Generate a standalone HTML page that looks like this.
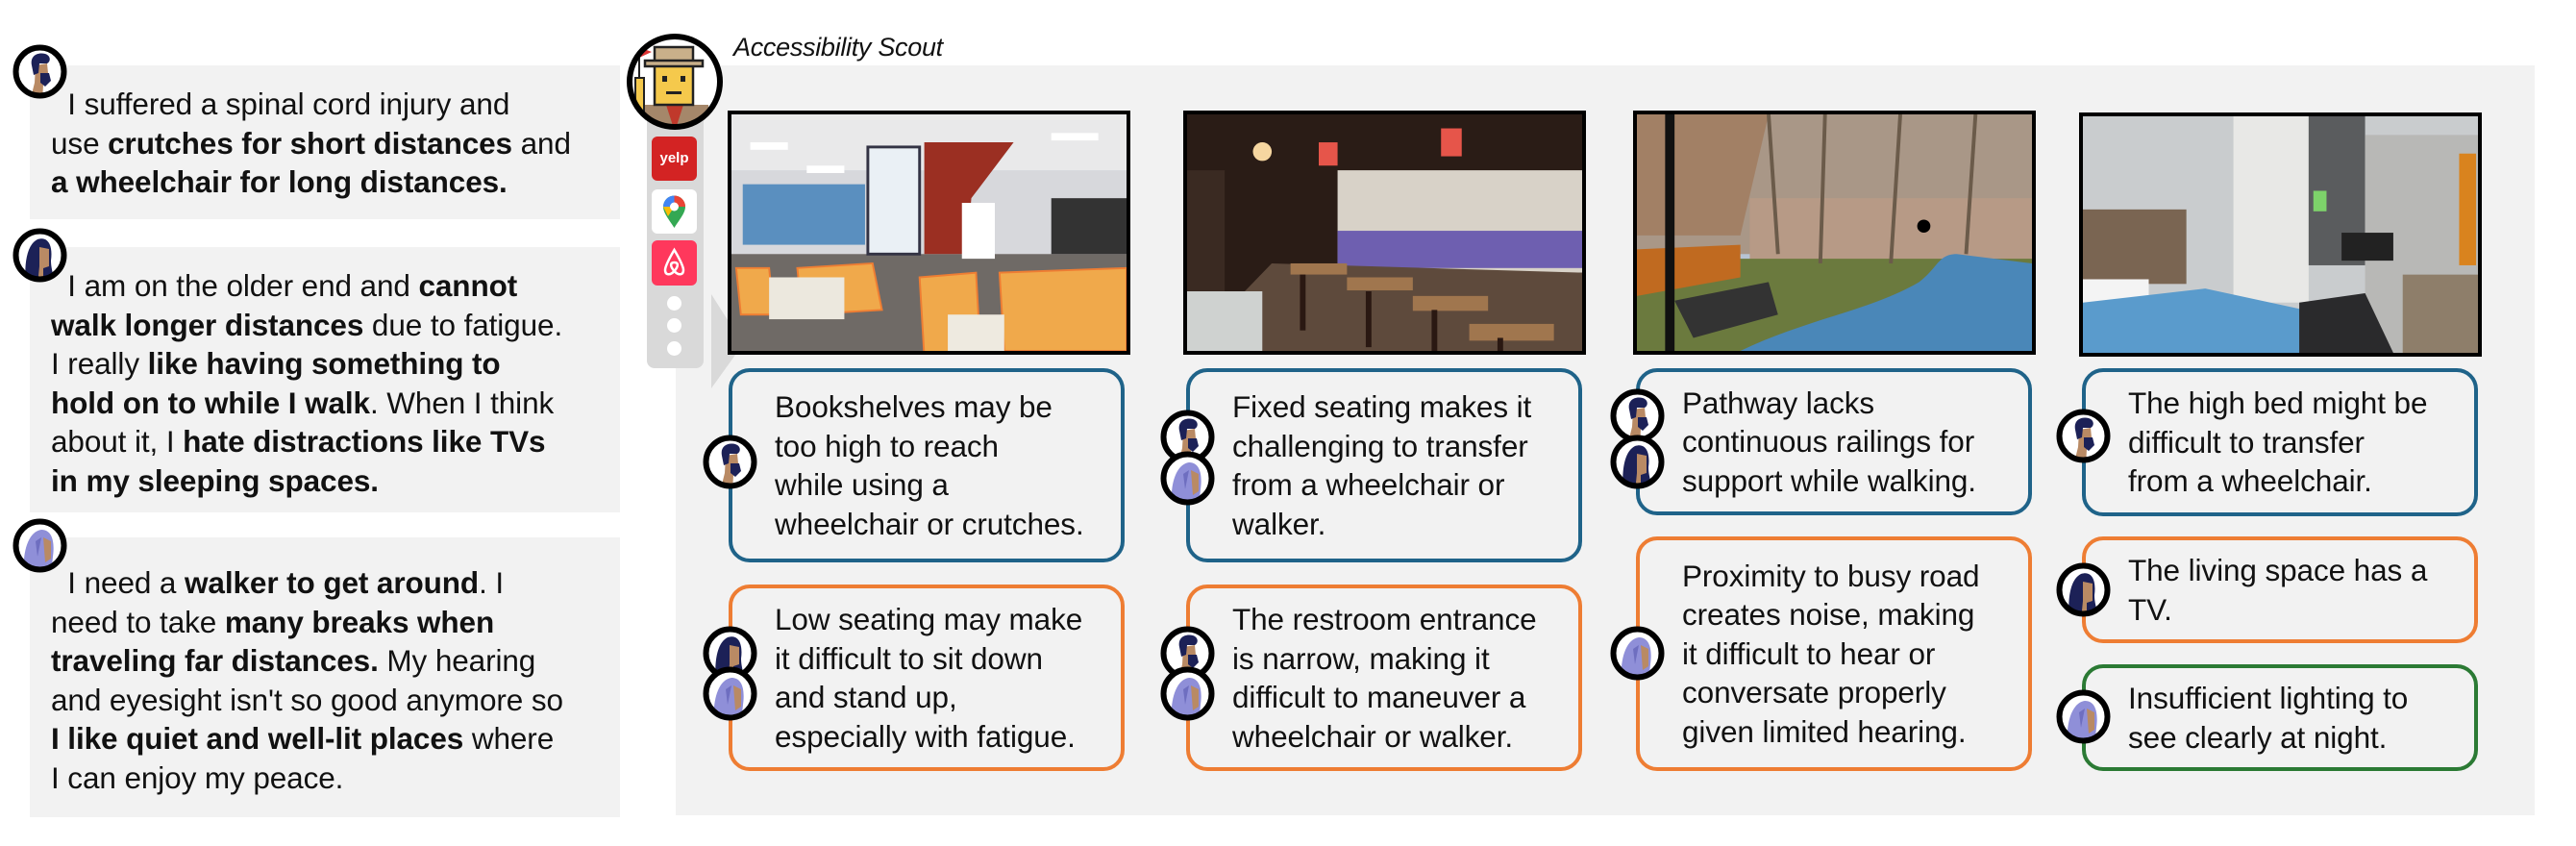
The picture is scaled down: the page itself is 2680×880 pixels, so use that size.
<!DOCTYPE html>
<html><head><meta charset="utf-8">
<style>
*{margin:0;padding:0;box-sizing:border-box}
body{width:2680px;height:880px;background:#fff;position:relative;overflow:hidden;font-family:"Liberation Sans",sans-serif;color:#111}
.abs{position:absolute}
.lp{position:absolute;left:31px;width:614px;background:#f2f2f2}
.lt{position:absolute;left:53px;font-size:31.5px;line-height:40.5px;white-space:nowrap;letter-spacing:-0.1px}
.lt b{font-weight:bold}
.av{position:absolute;width:57px;height:57px}
.img{position:absolute;border:4px solid #000;width:419px;height:254px;overflow:hidden;background:#888}
.img svg{display:block;width:100%;height:100%}
.card{position:absolute;width:412px;border:4px solid;border-radius:22px;background:#f2f2f2;display:flex;align-items:center;padding-left:44px;font-size:31.5px;line-height:40.5px;white-space:nowrap;letter-spacing:-0.1px}
.b{border-color:#1f6389}.o{border-color:#ee7d33}.g{border-color:#2b7a34}
</style></head><body>
<svg width="0" height="0" style="position:absolute">
<defs>
<clipPath id="cc"><circle cx="28.5" cy="28.5" r="23"/></clipPath>
<symbol id="A" viewBox="0 0 57 57">
<circle cx="28.5" cy="28.5" r="25" fill="#fff"/>
<g clip-path="url(#cc)">
<path d="M24 22 L36 20 L38 40 L32 42 L31 60 L18 60 L23 40 Z" fill="#b98a64"/>
<path d="M20 22 C18 12 26 8 34 10 C40 12 40 18 36 20 L28 20 L27 30 L22 32 Z" fill="#1c2157"/>
<path d="M29 30 L38 30 L40 38 L34 44 L29 40 Z" fill="#1c2157"/>
</g>
<circle cx="28.5" cy="28.5" r="25" fill="none" stroke="#000" stroke-width="6"/>
</symbol>
<symbol id="B" viewBox="0 0 57 57">
<circle cx="28.5" cy="28.5" r="25" fill="#fff"/>
<g clip-path="url(#cc)">
<path d="M14 60 C12 40 14 18 26 12 C38 8 42 20 40 34 C40 44 44 52 44 60 Z" fill="#1c2157"/>
<path d="M28 20 L38 22 L38 40 L32 42 L32 60 L26 60 L28 40 Z" fill="#b98a64"/>
</g>
<circle cx="28.5" cy="28.5" r="25" fill="none" stroke="#000" stroke-width="6"/>
</symbol>
<symbol id="C" viewBox="0 0 57 57">
<circle cx="28.5" cy="28.5" r="25" fill="#fff"/>
<g clip-path="url(#cc)">
<path d="M12 60 C10 36 16 14 30 12 C42 12 44 26 42 40 L40 60 Z" fill="#8f8fd8"/>
<path d="M32 20 L40 24 L40 42 L34 46 Z" fill="#b98a64"/>
<path d="M24 24 L30 20 L26 40 Z" fill="#6e6ec0"/>
</g>
<circle cx="28.5" cy="28.5" r="25" fill="none" stroke="#000" stroke-width="6"/>
</symbol>
</defs>
</svg>

<!-- left panels -->
<div class="lp" style="top:68px;height:160px"></div>
<div class="lp" style="top:257px;height:276px"></div>
<div class="lp" style="top:559px;height:291px"></div>
<svg class="av" style="left:13px;top:46px"><use href="#A"/></svg>
<svg class="av" style="left:13px;top:237px"><use href="#B"/></svg>
<svg class="av" style="left:13px;top:539px"><use href="#C"/></svg>

<div class="lt" style="top:88px">&nbsp;&nbsp;I suffered a spinal cord injury and<br>use <b>crutches for short distances</b> and<br><b>a wheelchair for long distances.</b></div>
<div class="lt" style="top:277px">&nbsp;&nbsp;I am on the older end and <b>cannot</b><br><b>walk longer distances</b> due to fatigue.<br>I really <b>like having something to</b><br><b>hold on to while I walk</b>. When I think<br>about it, I <b>hate distractions like TVs</b><br><b>in my sleeping spaces.</b></div>
<div class="lt" style="top:586px">&nbsp;&nbsp;I need a <b>walker to get around</b>. I<br>need to take <b>many breaks when</b><br><b>traveling far distances.</b> My hearing<br>and eyesight isn't so good anymore so<br><b>I like quiet and well-lit places</b> where<br>I can enjoy my peace.</div>

<!-- main panel -->
<div class="abs" style="left:703px;top:68px;width:1934px;height:780px;background:#f2f2f2"></div>
<div class="abs" style="left:673px;top:90px;width:59px;height:293px;background:#d9d9d9;border-radius:0 0 8px 8px"></div>
<svg class="abs" style="left:730px;top:306px" width="46" height="100"><polygon points="10,0 43,52 10,98" fill="#d9d9d9"/></svg>
<div class="abs" style="left:763px;top:34px;font-size:27px;font-style:italic;letter-spacing:-0.3px">Accessibility Scout</div>

<!-- scout avatar -->
<svg class="abs" style="left:651px;top:33px" width="102" height="104" viewBox="0 0 102 104">
<defs><clipPath id="sc"><circle cx="51" cy="52" r="47"/></clipPath></defs>
<circle cx="51" cy="52" r="47" fill="#fff"/>
<g clip-path="url(#sc)">
<rect x="18" y="76" width="68" height="32" fill="#a5876a"/>
<path d="M42 76 L51 104 L60 76Z" fill="#c0392b"/>
<rect x="30" y="34" width="40" height="42" fill="#f5c94c" stroke="#222" stroke-width="2.5"/>
<rect x="30" y="16" width="40" height="16" fill="#c9b08a" stroke="#222" stroke-width="2.5"/>
<rect x="20" y="30" width="60" height="6" fill="#c9b08a" stroke="#222" stroke-width="2.5"/>
<rect x="38" y="46" width="5" height="6" fill="#222"/><rect x="57" y="46" width="5" height="6" fill="#222"/>
<rect x="42" y="62" width="16" height="3" fill="#222"/>
<rect x="10" y="48" width="9" height="34" fill="#f5c94c" stroke="#222" stroke-width="2"/>
<line x1="14" y1="16" x2="14" y2="48" stroke="#222" stroke-width="2"/>
<path d="M14 16 L27 21 L14 27Z" fill="#d33"/>
</g>
<circle cx="51" cy="52" r="47" fill="none" stroke="#000" stroke-width="6"/>
</svg>
<!-- app icons -->
<div class="abs" style="left:678px;top:142px;width:47px;height:46px;background:#d32323;border-radius:6px;color:#fff;font-weight:bold;font-size:15px;line-height:46px;text-align:center">yelp</div>
<svg class="abs" style="left:678px;top:197px" width="47" height="46" viewBox="0 0 47 46"><rect width="47" height="46" rx="6" fill="#fff"/><path d="M23.5 40 C17 30 12 24 12 18 A11.5 11.5 0 0 1 35 18 C35 24 30 30 23.5 40Z" fill="#34a853"/><path d="M12 18 A11.5 11.5 0 0 1 23.5 6.5 L23.5 18Z" fill="#4285f4"/><path d="M23.5 6.5 A11.5 11.5 0 0 1 35 18 L23.5 18Z" fill="#ea4335"/><path d="M12 18 L23.5 18 L17 28Z" fill="#fbbc04"/><circle cx="23.5" cy="18" r="4.5" fill="#fff"/></svg>
<svg class="abs" style="left:678px;top:250px" width="47" height="47" viewBox="0 0 47 47"><rect width="47" height="47" rx="6" fill="#ff385c"/><path d="M23.5 10 C20 16 14 26 14 31 C14 36 19 37 23.5 32 C28 37 33 36 33 31 C33 26 27 16 23.5 10Z M23.5 32 C19 27 19 23 23.5 23 C28 23 28 27 23.5 32Z" fill="none" stroke="#fff" stroke-width="2.5"/></svg>
<div class="abs" style="left:694px;top:308px;width:15px;height:15px;border-radius:50%;background:#fff"></div>
<div class="abs" style="left:694px;top:331px;width:15px;height:15px;border-radius:50%;background:#fff"></div>
<div class="abs" style="left:694px;top:355px;width:15px;height:15px;border-radius:50%;background:#fff"></div>

<!-- images -->
<div class="img" style="left:757px;top:115px"><svg viewBox="0 0 420 254" preserveAspectRatio="none">
<rect width="420" height="254" fill="#d7d8dc"/><rect y="0" width="420" height="60" fill="#e9e9ea"/>
<rect y="150" width="420" height="104" fill="#6f6a66"/>
<rect x="145" y="35" width="55" height="115" fill="#eaf0f5" stroke="#334" stroke-width="3"/>
<path d="M205 30 L300 30 L255 90 L250 150 L205 150Z" fill="#9b2f22"/>
<rect x="245" y="95" width="35" height="60" fill="#fff"/><rect x="340" y="90" width="80" height="60" fill="#333"/>
<rect x="12" y="75" width="130" height="65" fill="#5a8fbf"/>
<path d="M5 165 L40 165 L45 215 L10 215Z M70 165 L150 160 L160 210 L75 215Z M200 175 L260 170 L265 260 L205 260Z M285 170 L420 165 L420 254 L290 254Z" fill="#f0a94b" stroke="#ee7d33" stroke-width="2"/>
<rect x="40" y="175" width="80" height="45" fill="#ece8de"/><rect x="230" y="215" width="60" height="39" fill="#eeeae0"/>
<rect x="20" y="30" width="40" height="8" fill="#fff"/><rect x="80" y="55" width="40" height="8" fill="#fff"/><rect x="340" y="20" width="50" height="8" fill="#fff"/>
</svg></div>
<div class="img" style="left:1231px;top:115px"><svg viewBox="0 0 420 254" preserveAspectRatio="none">
<rect width="420" height="254" fill="#2a1c16"/>
<rect x="160" y="60" width="260" height="110" fill="#d8d2c8"/>
<rect x="160" y="125" width="260" height="40" fill="#6e5fb0"/>
<rect x="0" y="60" width="40" height="150" fill="#3a2a22"/>
<path d="M0 254 L90 160 L420 170 L420 254Z" fill="#5e4a3c"/>
<g fill="#a0764e"><rect x="110" y="160" width="60" height="12"/><rect x="170" y="175" width="70" height="14"/><rect x="240" y="195" width="80" height="16"/><rect x="300" y="225" width="90" height="18"/></g>
<g fill="#2a1812"><rect x="120" y="172" width="6" height="60"/><rect x="190" y="190" width="6" height="60"/><rect x="260" y="210" width="6" height="44"/><rect x="330" y="240" width="6" height="14"/></g>
<rect x="0" y="190" width="80" height="64" fill="#cfd2d0"/>
<circle cx="80" cy="40" r="10" fill="#f6d6a0"/><rect x="140" y="30" width="20" height="25" fill="#e6554a"/><rect x="270" y="15" width="22" height="30" fill="#e6554a"/>
</svg></div>
<div class="img" style="left:1699px;top:115px"><svg viewBox="0 0 420 254" preserveAspectRatio="none">
<rect width="420" height="254" fill="#b7c4d4"/>
<rect x="0" y="0" width="420" height="150" fill="#a99787"/>
<rect x="120" y="90" width="300" height="70" fill="#b79a86"/>
<path d="M0 0 L140 0 L110 130 L0 130Z" fill="#a07a5c" opacity=".8"/>
<rect y="155" width="420" height="99" fill="#6b7a3e"/>
<path d="M110 254 C180 220 250 210 300 180 C320 165 320 150 340 150 L420 160 L420 254Z" fill="#4a87b8"/>
<path d="M0 145 L110 140 L110 175 L0 195Z" fill="#c06a20"/>
<rect x="30" y="0" width="10" height="254" fill="#111"/>
<path d="M40 200 L140 180 L150 215 L60 240Z" fill="#333"/>
<g stroke="#6b5b4a" stroke-width="4"><line x1="200" y1="0" x2="195" y2="160"/><line x1="280" y1="0" x2="270" y2="160"/><line x1="360" y1="0" x2="350" y2="150"/><line x1="140" y1="0" x2="150" y2="150"/></g>
<circle cx="305" cy="120" r="7" fill="#000"/>
</svg></div>
<div class="img" style="left:2163px;top:117px"><svg viewBox="0 0 420 254" preserveAspectRatio="none">
<rect width="420" height="254" fill="#c9ccce"/>
<rect x="160" y="0" width="80" height="200" fill="#e8e8e6"/><rect x="240" y="0" width="60" height="160" fill="#5a5c5e"/>
<rect x="300" y="20" width="120" height="234" fill="#b8b8b6"/>
<rect x="0" y="100" width="110" height="80" fill="#7a6552"/>
<rect x="0" y="175" width="70" height="35" fill="#f4f4f4"/>
<path d="M0 200 L130 185 L245 210 L250 254 L0 254Z" fill="#5a9bcc"/>
<path d="M230 200 L300 190 L330 254 L230 254Z" fill="#2a2a2c"/>
<rect x="340" y="170" width="80" height="84" fill="#8e7e6a"/>
<rect x="400" y="40" width="18" height="120" fill="#d9831e"/>
<rect x="245" y="80" width="14" height="22" fill="#7dd36a"/>
<rect x="275" y="125" width="55" height="30" fill="#222"/>
</svg></div>

<!-- cards -->
<div class="card b" style="left:758px;top:383px;height:202px">Bookshelves may be<br>too high to reach<br>while using a<br>wheelchair or crutches.</div>
<div class="card o" style="left:758px;top:608px;height:194px">Low seating may make<br>it difficult to sit down<br>and stand up,<br>especially with fatigue.</div>
<div class="card b" style="left:1234px;top:383px;height:202px">Fixed seating makes it<br>challenging to transfer<br>from a wheelchair or<br>walker.</div>
<div class="card o" style="left:1234px;top:608px;height:194px">The restroom entrance<br>is narrow, making it<br>difficult to maneuver a<br>wheelchair or walker.</div>
<div class="card b" style="left:1702px;top:383px;height:153px">Pathway lacks<br>continuous railings for<br>support while walking.</div>
<div class="card o" style="left:1702px;top:558px;height:244px">Proximity to busy road<br>creates noise, making<br>it difficult to hear or<br>conversate properly<br>given limited hearing.</div>
<div class="card b" style="left:2166px;top:383px;height:154px">The high bed might be<br>difficult to transfer<br>from a wheelchair.</div>
<div class="card o" style="left:2166px;top:558px;height:111px">The living space has a<br>TV.</div>
<div class="card g" style="left:2166px;top:691px;height:111px">Insufficient lighting to<br>see clearly at night.</div>

<!-- card avatars -->
<svg class="av" style="left:731px;top:452px"><use href="#A"/></svg>
<svg class="av" style="left:731px;top:651px"><use href="#B"/></svg>
<svg class="av" style="left:731px;top:693px"><use href="#C"/></svg>
<svg class="av" style="left:1207px;top:426px"><use href="#A"/></svg>
<svg class="av" style="left:1207px;top:469px"><use href="#C"/></svg>
<svg class="av" style="left:1207px;top:651px"><use href="#A"/></svg>
<svg class="av" style="left:1207px;top:693px"><use href="#C"/></svg>
<svg class="av" style="left:1675px;top:404px"><use href="#A"/></svg>
<svg class="av" style="left:1675px;top:452px"><use href="#B"/></svg>
<svg class="av" style="left:1675px;top:651px"><use href="#C"/></svg>
<svg class="av" style="left:2139px;top:425px"><use href="#A"/></svg>
<svg class="av" style="left:2139px;top:585px"><use href="#B"/></svg>
<svg class="av" style="left:2139px;top:717px"><use href="#C"/></svg>
</body></html>
